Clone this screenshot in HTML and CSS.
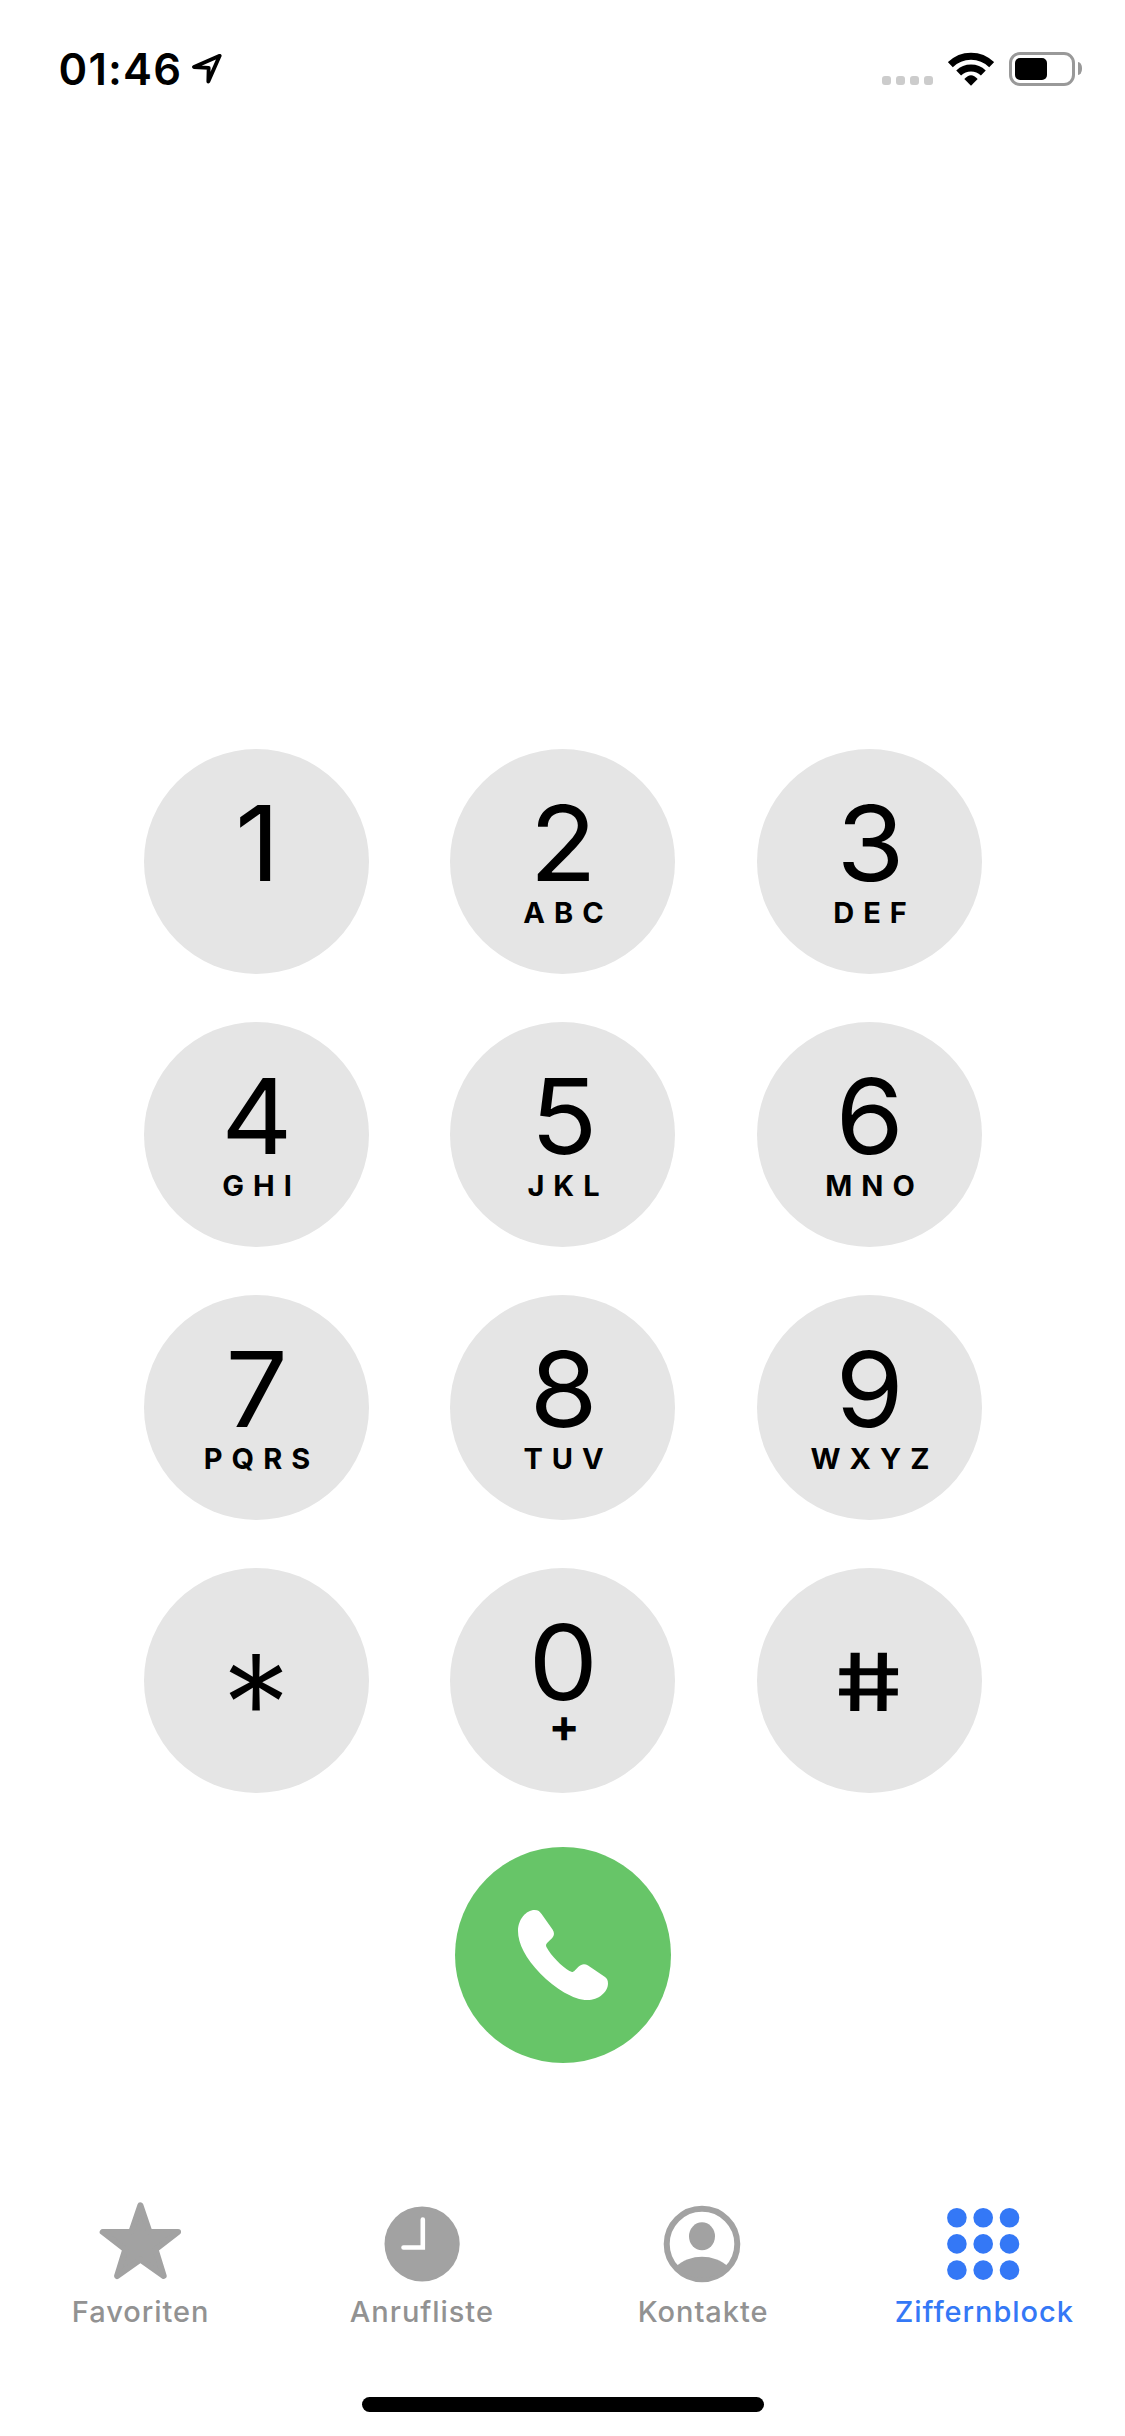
FILE: index.html
```
<!DOCTYPE html>
<html lang="de">
<head>
    <meta charset="UTF-8">
    <meta name="viewport" content="width=device-width, initial-scale=1.0">
    <title>Telefon</title>
    <link rel="stylesheet" href="styles.css">
</head>
<body>

<header class="statusbar">
    <span class="time">01:46</span>
    <svg class="location" viewBox="455 69 90 92">
        <path d="M538 77L461 110.500L505 113L504 154Z"/>
    </svg>
    <div class="signal"><i></i><i></i><i></i><i></i></div>
    <svg class="wifi" viewBox="264 65 138 102">
        <path class="arc" d="M271 103A88 88 0 0 1 395 103"/>
        <path class="arc" d="M296 128A53.500 53.500 0 0 1 370 128"/>
        <path d="M333 166L313 146Q333 123 353 146Z"/>
    </svg>
    <div class="battery"><div class="level"></div></div>
    <div class="nub"></div>
</header>

<main class="keypad">
    <button class="key"><span class="digit">1</span></button>
    <button class="key"><span class="digit">2</span><span class="letters">ABC</span></button>
    <button class="key"><span class="digit">3</span><span class="letters">DEF</span></button>
    <button class="key"><span class="digit">4</span><span class="letters">GHI</span></button>
    <button class="key"><span class="digit">5</span><span class="letters">JKL</span></button>
    <button class="key"><span class="digit">6</span><span class="letters">MNO</span></button>
    <button class="key"><span class="digit">7</span><span class="letters">PQRS</span></button>
    <button class="key"><span class="digit">8</span><span class="letters">TUV</span></button>
    <button class="key"><span class="digit">9</span><span class="letters">WXYZ</span></button>
    <button class="key"><span class="star">*</span></button>
    <button class="key"><span class="digit">0</span><span class="plus">+</span></button>
    <button class="key"><span class="hash">#</span></button>
</main>

<button class="call" aria-label="Anrufen">
    <svg viewBox="233 239 271 271">
        <path d="M283 239C294 239 299 244 304 251L337 298C343 307 343 316 336 323L322 337C317 342 316 346 319 351C333 377 364 408 388 423C395 427 399 426 404 421L415 410C424 401 434 400 444 406L494 440C501 445 504 451 504 460C504 486 475 510 442 510C400 510 345 475 300 430C256 384 233 340 233 302C233 268 257 239 283 239Z"/>
    </svg>
</button>

<nav class="tabs">
    <a class="tab">
        <svg viewBox="0 0 84 84">
            <path class="rounded" d="M41.400 3.300L50.500 30H79.100L56.500 47.500L64.700 74L41.400 57.600L18.100 74L26.300 47.500L3.700 30H32.300Z"/>
        </svg>
        <span>Favoriten</span>
    </a>
    <a class="tab">
        <svg viewBox="0 0 84 84">
            <circle cx="42.100" cy="42" r="37.600"/>
            <path class="hands" d="M42.800 17.500V45.500H23.500"/>
        </svg>
        <span>Anrufliste</span>
    </a>
    <a class="tab">
        <svg viewBox="0 0 84 84">
            <circle class="ring" cx="41" cy="42" r="35.300"/>
            <ellipse cx="41" cy="34.300" rx="13" ry="14"/>
            <path d="M15 64.500C29 51.400 53 51.400 67 64.500A35.300 35.300 0 0 1 15 64.500Z"/>
        </svg>
        <span>Kontakte</span>
    </a>
    <a class="tab active">
        <svg viewBox="0 0 84 84">
            <circle cx="14.900" cy="15.700" r="9.800"/>
            <circle cx="41.200" cy="15.700" r="9.800"/>
            <circle cx="67.500" cy="15.700" r="9.800"/>
            <circle cx="14.900" cy="41.900" r="9.800"/>
            <circle cx="41.200" cy="41.900" r="9.800"/>
            <circle cx="67.500" cy="41.900" r="9.800"/>
            <circle cx="14.900" cy="68.100" r="9.800"/>
            <circle cx="41.200" cy="68.100" r="9.800"/>
            <circle cx="67.500" cy="68.100" r="9.800"/>
        </svg>
        <span>Ziffernblock</span>
    </a>
</nav>

<div class="home-indicator"></div>

</body>
</html>
```

FILE: styles.css
```
* {
    box-sizing: border-box;
}
body {
    margin: 0;
    height: 2436px;
    background-color: #ffffff;
    color: #000000;
    font-family: Inter, "Liberation Sans", sans-serif;
    display: flex;
    flex-direction: column;
    align-items: center;
}
button {
    border: none;
    padding: 0;
    font-family: inherit;
    color: inherit;
    cursor: pointer;
}

/* Status bar */
.statusbar {
    width: 100%;
    height: 132px;
    padding: 47px 43px 0 58.5px;
    display: flex;
    align-items: flex-start;
}
.time {
    width: 133px;
    font-size: 43.5px;
    line-height: 44px;
    font-weight: 600;
    letter-spacing: 1.2px;
}
.location {
    width: 30px;
    height: 31px;
    margin-top: 6px;
    fill: none;
    stroke: #000000;
    stroke-width: 11.5;
    stroke-linejoin: round;
}
.signal {
    display: flex;
    gap: 5px;
    margin: 29px 15px 0 auto;
}
.signal i {
    width: 9px;
    height: 9px;
    border-radius: 3px;
    background-color: #cccccc;
}
.wifi {
    width: 46px;
    height: 34px;
    margin-top: 5px;
}
.wifi .arc {
    fill: none;
    stroke: #000000;
    stroke-width: 21;
}
.battery {
    width: 66px;
    height: 34px;
    margin: 5px 3px 0 15px;
    padding: 3px;
    border: 3px solid #999999;
    border-radius: 11px;
}
.level {
    width: 32px;
    height: 22px;
    border-radius: 5px;
    background-color: #000000;
}
.nub {
    width: 4px;
    height: 13px;
    margin-top: 15px;
    border-radius: 0 4px 4px 0 / 0 6px 6px 0;
    background-color: #999999;
}

/* Keypad */
.keypad {
    margin-top: 617px;
    display: grid;
    grid-template-columns: repeat(3, 225px);
    gap: 48px 81.5px;
}
.key {
    height: 225px;
    border-radius: 50%;
    background-color: #e5e5e5;
    display: flex;
    flex-direction: column;
    align-items: center;
    justify-content: flex-start;
}
.digit {
    margin-top: 41px;
    padding-left: 2px;
    font-size: 105px;
    line-height: 105px;
    transform: scaleX(1.05);
}
.letters {
    margin-top: 3px;
    padding-left: 11px;
    font-size: 29px;
    line-height: 29px;
    font-weight: 700;
    letter-spacing: 9px;
}
.plus {
    margin-top: -3px;
    padding-left: 3px;
    font-size: 46px;
    line-height: 29px;
    font-weight: 700;
}
.star {
    margin-top: 66px;
    font-size: 138px;
    line-height: 140px;
    font-weight: 350;
}
.hash {
    margin-top: 74px;
    font-size: 80px;
    line-height: 80px;
    font-weight: 450;
    transform: scaleX(1.33) skewX(9deg);
}

/* Call button */
.call {
    width: 216px;
    height: 216px;
    margin-top: 54px;
    border-radius: 50%;
    background-color: #67c568;
    display: flex;
    align-items: center;
    justify-content: center;
}
.call svg {
    width: 90px;
    height: 90px;
    fill: #ffffff;
}

/* Tab bar */
.tabs {
    width: 100%;
    margin-top: 139px;
    display: flex;
}
.tab {
    flex: 1;
    display: flex;
    flex-direction: column;
    align-items: center;
    gap: 11px;
    color: #929292;
    fill: #a2a2a2;
    stroke: #a2a2a2;
    stroke-width: 0;
    font-size: 29px;
    line-height: 29px;
    font-weight: 500;
    letter-spacing: 0.95px;
}
.tab svg {
    width: 84px;
    height: 84px;
}
.tab.active {
    color: #3478f6;
    fill: #3478f6;
}
.rounded {
    stroke-width: 6;
    stroke-linejoin: round;
}
.hands {
    fill: none;
    stroke: #ffffff;
    stroke-width: 4.6;
    stroke-linecap: round;
}
.ring {
    fill: none;
    stroke-width: 6;
}
.home-indicator {
    width: 402px;
    height: 15px;
    margin-top: 71px;
    border-radius: 8px;
    background-color: #000000;
}
```
